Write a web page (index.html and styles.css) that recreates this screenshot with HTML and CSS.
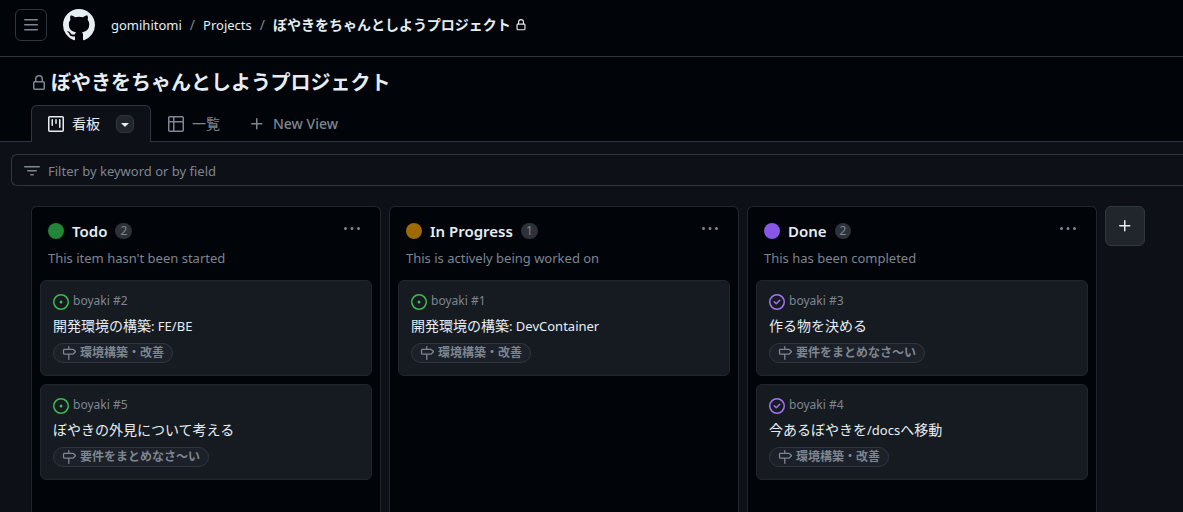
FILE: index.html
```html
<!DOCTYPE html>
<html lang="ja">
<head>
<meta charset="utf-8">
<meta name="viewport" content="width=device-width, initial-scale=1">
<title>ぼやきをちゃんとしようプロジェクト</title>
<link rel="stylesheet" href="styles.css">
</head>
<body>
<svg class="sprite" aria-hidden="true">
  <symbol id="i-bars" viewBox="0 0 16 16"><path d="M1 2.75A.75.75 0 0 1 1.75 2h12.5a.75.75 0 0 1 0 1.5H1.75A.75.75 0 0 1 1 2.75Zm0 5A.75.75 0 0 1 1.75 7h12.5a.75.75 0 0 1 0 1.5H1.75A.75.75 0 0 1 1 7.75ZM1.75 12h12.5a.75.75 0 0 1 0 1.5H1.75a.75.75 0 0 1 0-1.5Z"/></symbol>
  <symbol id="i-mark" viewBox="0 0 16 16"><path d="M8 0c4.42 0 8 3.58 8 8a8.013 8.013 0 0 1-5.45 7.59c-.4.08-.55-.17-.55-.38 0-.27.01-1.13.01-2.2 0-.75-.25-1.23-.54-1.48 1.78-.2 3.65-.88 3.65-3.95 0-.88-.31-1.59-.82-2.15.08-.2.36-1.02-.08-2.12 0 0-.67-.22-2.2.82-.64-.18-1.32-.27-2-.27-.68 0-1.36.09-2 .27-1.53-1.03-2.2-.82-2.2-.82-.44 1.1-.16 1.92-.08 2.12-.51.56-.82 1.28-.82 2.15 0 3.06 1.86 3.75 3.64 3.95-.23.2-.44.55-.51 1.07-.46.21-1.61.55-2.33-.66-.15-.24-.6-.83-1.23-.82-.67.01-.27.38.01.53.34.19.73.9.82 1.13.16.45.68 1.31 2.69.94 0 .67.01 1.3.01 1.49 0 .21-.15.45-.55.38A7.995 7.995 0 0 1 0 8c0-4.42 3.58-8 8-8Z"/></symbol>
  <symbol id="i-lock" viewBox="0 0 16 16"><path d="M4 4a4 4 0 0 1 8 0v2h.25c.966 0 1.75.784 1.75 1.75v5.5A1.75 1.75 0 0 1 12.25 15h-8.5A1.75 1.75 0 0 1 2 13.25v-5.5C2 6.784 2.784 6 3.75 6H4Zm8.25 3.5h-8.5a.25.25 0 0 0-.25.25v5.5c0 .138.112.25.25.25h8.5a.25.25 0 0 0 .25-.25v-5.5a.25.25 0 0 0-.25-.25ZM10.5 6V4a2.5 2.5 0 1 0-5 0v2Z"/></symbol>
  <symbol id="i-open" viewBox="0 0 16 16"><path d="M8 9.5a1.5 1.5 0 1 0 0-3 1.5 1.5 0 0 0 0 3Z"/><path d="M8 0a8 8 0 1 1 0 16A8 8 0 0 1 8 0ZM1.5 8a6.5 6.5 0 1 0 13 0 6.5 6.5 0 0 0-13 0Z"/></symbol>
  <symbol id="i-closed" viewBox="0 0 16 16"><path d="M11.28 6.78a.75.75 0 0 0-1.06-1.06L7.25 8.69 5.78 7.22a.75.75 0 0 0-1.06 1.06l2 2a.75.75 0 0 0 1.06 0l3.5-3.5Z"/><path d="M16 8A8 8 0 1 1 0 8a8 8 0 0 1 16 0Zm-1.5 0a6.5 6.5 0 1 0-13 0 6.5 6.5 0 0 0 13 0Z"/></symbol>
  <symbol id="i-milestone" viewBox="0 0 16 16"><path d="M7.75 0a.75.75 0 0 1 .75.75V3h3.634c.414 0 .814.147 1.13.414l2.07 1.75a1.75 1.75 0 0 1 0 2.672l-2.07 1.75a1.75 1.75 0 0 1-1.13.414H8.5v5.25a.75.75 0 0 1-1.5 0V10H2.75A1.75 1.75 0 0 1 1 8.25v-3.5C1 3.784 1.784 3 2.75 3H7V.75A.75.75 0 0 1 7.75 0Zm4.384 8.5a.25.25 0 0 0 .161-.06l2.07-1.75a.248.248 0 0 0 0-.38l-2.07-1.75a.25.25 0 0 0-.161-.06H2.75a.25.25 0 0 0-.25.25v3.5c0 .138.112.25.25.25h9.384Z"/></symbol>
  <symbol id="i-project" viewBox="0 0 16 16"><path d="M1.75 0h12.5C15.216 0 16 .784 16 1.75v12.5A1.75 1.75 0 0 1 14.25 16H1.75A1.75 1.75 0 0 1 0 14.25V1.75C0 .784.784 0 1.75 0ZM1.5 1.75v12.5c0 .138.112.25.25.25h12.5a.25.25 0 0 0 .25-.25V1.75a.25.25 0 0 0-.25-.25H1.75a.25.25 0 0 0-.25.25ZM11.75 3a.75.75 0 0 1 .75.75v7.5a.75.75 0 0 1-1.5 0v-7.5a.75.75 0 0 1 .75-.75Zm-8.25.75a.75.75 0 0 1 1.5 0v5.5a.75.75 0 0 1-1.5 0ZM8 3a.75.75 0 0 1 .75.75v3.5a.75.75 0 0 1-1.5 0v-3.5A.75.75 0 0 1 8 3Z"/></symbol>
  <symbol id="i-table" viewBox="0 0 16 16"><path d="M0 1.75C0 .784.784 0 1.75 0h12.5C15.216 0 16 .784 16 1.75v12.5A1.75 1.75 0 0 1 14.25 16H1.75A1.75 1.75 0 0 1 0 14.25ZM6.5 6.5v8h7.75a.25.25 0 0 0 .25-.25V6.5Zm8-1.5V1.75a.25.25 0 0 0-.25-.25H6.5V5Zm-13 1.5v7.75c0 .138.112.25.25.25H5v-8ZM5 5V1.5H1.75a.25.25 0 0 0-.25.25V5Z"/></symbol>
  <symbol id="i-filter" viewBox="0 0 16 16"><path d="M.75 3h14.5a.75.75 0 0 1 0 1.5H.75a.75.75 0 0 1 0-1.5ZM3 7.75A.75.75 0 0 1 3.75 7h8.5a.75.75 0 0 1 0 1.5h-8.5A.75.75 0 0 1 3 7.75Zm3 4a.75.75 0 0 1 .75-.75h2.5a.75.75 0 0 1 0 1.5h-2.5a.75.75 0 0 1-.75-.75Z"/></symbol>
  <symbol id="i-plus" viewBox="0 0 16 16"><path d="M7.75 2a.75.75 0 0 1 .75.75V7h4.25a.75.75 0 0 1 0 1.5H8.5v4.25a.75.75 0 0 1-1.5 0V8.5H2.75a.75.75 0 0 1 0-1.5H7V2.75A.75.75 0 0 1 7.75 2Z"/></symbol>
  <symbol id="i-down" viewBox="0 0 16 16"><path d="m4.427 7.427 3.396 3.396a.25.25 0 0 0 .354 0l3.396-3.396A.25.25 0 0 0 11.396 7H4.604a.25.25 0 0 0-.177.427Z"/></symbol>
  <symbol id="i-kebab" viewBox="0 0 16 16"><path d="M8 9a1.5 1.5 0 1 0 0-3 1.5 1.5 0 0 0 0 3ZM1.5 9a1.5 1.5 0 1 0 0-3 1.5 1.5 0 0 0 0 3Zm13 0a1.5 1.5 0 1 0 0-3 1.5 1.5 0 0 0 0 3Z"/></symbol>
</svg>

<header class="topbar">
  <button class="menu-button" type="button" aria-label="Open menu"><svg class="icon"><use href="#i-bars"/></svg></button>
  <a class="logo" href="#" aria-label="Home"><svg class="icon icon-logo"><use href="#i-mark"/></svg></a>
  <nav class="crumbs" aria-label="Breadcrumb">
    <a href="#">gomihitomi</a>
    <span class="slash">/</span>
    <a href="#">Projects</a>
    <span class="slash">/</span>
    <a class="crumb-current" href="#">ぼやきをちゃんとしようプロジェクト<svg class="icon icon-small"><use href="#i-lock"/></svg></a>
  </nav>
</header>

<section class="project-head">
  <h1 class="project-title"><svg class="icon"><use href="#i-lock"/></svg>ぼやきをちゃんとしようプロジェクト</h1>
  <nav class="tabs" aria-label="Views">
    <div class="tab tab-active">
      <a class="tab-link" href="#"><svg class="icon"><use href="#i-project"/></svg>看板</a>
      <button class="tab-menu" type="button" aria-label="View options"><svg class="icon"><use href="#i-down"/></svg></button>
    </div>
    <div class="tab"><a class="tab-link" href="#"><svg class="icon"><use href="#i-table"/></svg>一覧</a></div>
    <button class="new-view" type="button"><svg class="icon"><use href="#i-plus"/></svg>New View</button>
  </nav>
</section>

<main class="workspace">
  <div class="filter">
    <svg class="icon"><use href="#i-filter"/></svg>
    <input class="filter-input" type="text" aria-label="Filter" placeholder="Filter by keyword or by field">
  </div>

  <div class="board">
    <section class="column">
      <header class="column-head">
        <span class="dot dot-green"></span>
        <h2 class="column-title">Todo</h2>
        <span class="count">2</span>
        <button class="column-menu" type="button" aria-label="Todo options"><svg class="icon"><use href="#i-kebab"/></svg></button>
      </header>
      <p class="column-note">This item hasn't been started</p>
      <article class="card">
        <div class="card-ref"><svg class="icon icon-open"><use href="#i-open"/></svg><span>boyaki #2</span></div>
        <a class="card-title" href="#">開発環境の構築<span class="latin">: FE/BE</span></a>
        <a class="chip" href="#"><svg class="icon icon-chip"><use href="#i-milestone"/></svg>環境構築・改善</a>
      </article>
      <article class="card">
        <div class="card-ref"><svg class="icon icon-open"><use href="#i-open"/></svg><span>boyaki #5</span></div>
        <a class="card-title" href="#">ぼやきの外見について考える</a>
        <a class="chip" href="#"><svg class="icon icon-chip"><use href="#i-milestone"/></svg>要件をまとめなさ～い</a>
      </article>
    </section>

    <section class="column">
      <header class="column-head">
        <span class="dot dot-amber"></span>
        <h2 class="column-title">In Progress</h2>
        <span class="count">1</span>
        <button class="column-menu" type="button" aria-label="In Progress options"><svg class="icon"><use href="#i-kebab"/></svg></button>
      </header>
      <p class="column-note">This is actively being worked on</p>
      <article class="card">
        <div class="card-ref"><svg class="icon icon-open"><use href="#i-open"/></svg><span>boyaki #1</span></div>
        <a class="card-title" href="#">開発環境の構築<span class="latin">: DevContainer</span></a>
        <a class="chip" href="#"><svg class="icon icon-chip"><use href="#i-milestone"/></svg>環境構築・改善</a>
      </article>
    </section>

    <section class="column">
      <header class="column-head">
        <span class="dot dot-purple"></span>
        <h2 class="column-title">Done</h2>
        <span class="count">2</span>
        <button class="column-menu" type="button" aria-label="Done options"><svg class="icon"><use href="#i-kebab"/></svg></button>
      </header>
      <p class="column-note">This has been completed</p>
      <article class="card">
        <div class="card-ref"><svg class="icon icon-closed"><use href="#i-closed"/></svg><span>boyaki #3</span></div>
        <a class="card-title" href="#">作る物を決める</a>
        <a class="chip" href="#"><svg class="icon icon-chip"><use href="#i-milestone"/></svg>要件をまとめなさ～い</a>
      </article>
      <article class="card">
        <div class="card-ref"><svg class="icon icon-closed"><use href="#i-closed"/></svg><span>boyaki #4</span></div>
        <a class="card-title" href="#">今あるぼやきを<span class="latin">/docs</span>へ移動</a>
        <a class="chip" href="#"><svg class="icon icon-chip"><use href="#i-milestone"/></svg>環境構築・改善</a>
      </article>
    </section>

    <button class="add-column" type="button" aria-label="Add column"><svg class="icon"><use href="#i-plus"/></svg></button>
  </div>
</main>
</body>
</html>
```
FILE: styles.css
```css
:root {
  --canvas: #0d1117;
  --inset: #010409;
  --card: #161b22;
  --raised: #21262d;
  --border: #30363d;
  --border-muted: #21262d;
  --text: #e6edf3;
  --muted: #7d8590;
}

* { box-sizing: border-box; }

body {
  margin: 0;
  display: flex;
  flex-direction: column;
  height: 100vh;
  overflow: hidden;
  background: var(--canvas);
  color: var(--text);
  font: 13px/20px "Noto Sans", "Noto Sans CJK JP", sans-serif;
}

a { color: inherit; text-decoration: none; }

button {
  display: flex;
  align-items: center;
  justify-content: center;
  padding: 0;
  border: 0;
  background: none;
  color: var(--muted);
  font: inherit;
}

.sprite { position: absolute; width: 0; height: 0; }

.icon { flex: none; width: 16px; height: 16px; fill: currentColor; }
.icon-logo { width: 32px; height: 32px; }
.icon-small { width: 12px; height: 12px; }
.icon-chip { width: 14px; height: 14px; }
.icon-open { color: #3fb950; }
.icon-closed { color: #a371f7; }

/* Top bar */
.topbar {
  flex: none;
  display: flex;
  align-items: center;
  gap: 16px;
  padding: 9px 15px 15px;
  background: var(--inset);
  border-bottom: 1px solid var(--border);
}

.menu-button {
  width: 32px;
  height: 32px;
  border: 1px solid var(--border);
  border-radius: 6px;
}

.logo { display: flex; color: var(--text); }

.crumbs { display: flex; align-items: center; gap: 8px; white-space: nowrap; }
.slash { color: var(--muted); font-size: 14px; }

.crumb-current {
  display: flex;
  align-items: center;
  gap: 4px;
  font-size: 14px;
  font-weight: 600;
}

/* Project heading and view tabs */
.project-head {
  flex: none;
  padding: 10px 31px 0;
  background: var(--inset);
  box-shadow: inset 0 -1px var(--border);
}

.project-title {
  display: flex;
  align-items: center;
  gap: 4px;
  margin: 0 0 6px;
  font-size: 20px;
  font-weight: 600;
  line-height: 32px;
}

.project-title .icon { color: var(--muted); }

.tabs { display: flex; color: var(--muted); }

.tab {
  display: flex;
  align-items: center;
  gap: 16px;
  height: 37px;
  padding: 0 16px;
  border: 1px solid transparent;
  border-bottom: 0;
  border-radius: 6px 6px 0 0;
  font-size: 14px;
}

.tab-active { background: var(--canvas); border-color: var(--border); color: var(--text); }
.tab-link { display: flex; align-items: center; gap: 8px; }

.tab-menu {
  width: 18px;
  height: 18px;
  border: 1px solid var(--border);
  border-radius: 6px;
  background: var(--raised);
  color: var(--text);
}

.new-view { gap: 8px; padding: 0 12px; font-size: 14px; font-weight: 500; }

/* Filter */
.workspace {
  flex: 1;
  min-height: 0;
  display: flex;
  flex-direction: column;
}

.filter {
  flex: none;
  display: flex;
  align-items: center;
  gap: 8px;
  height: 32px;
  margin: 12px 0 20px 11px;
  padding-left: 12px;
  border: 1px solid var(--border);
  border-right: 0;
  border-radius: 6px 0 0 6px;
  color: var(--muted);
}

.filter .icon { margin-top: 2px; }

.filter-input {
  flex: 1;
  padding: 2px 0 0;
  border: 0;
  outline: 0;
  background: none;
  color: var(--text);
  font: inherit;
}

.filter-input::placeholder { color: var(--muted); opacity: 1; }

/* Board */
.board {
  flex: 1;
  min-height: 0;
  display: flex;
  gap: 8px;
  padding: 0 31px;
}

.column {
  flex: none;
  display: flex;
  flex-direction: column;
  gap: 8px;
  width: 350px;
  padding: 12px 8px 0;
  border: 1px solid var(--border-muted);
  border-bottom: 0;
  border-radius: 6px 6px 0 0;
  background: var(--inset);
}

.column-head { display: flex; align-items: center; gap: 8px; padding: 0 8px; }
.dot { width: 16px; height: 16px; border-radius: 50%; }
.dot-green { background: #238636; }
.dot-amber { background: #9e6a03; }
.dot-purple { background: #8957e5; }
.column-title { margin: 0; font-size: 15px; font-weight: 600; line-height: 24px; }

.count {
  min-width: 16px;
  padding: 0 5px;
  border-radius: 8px;
  background: #2d3239;
  color: var(--muted);
  font-size: 12px;
  line-height: 16px;
  text-align: center;
}

.column-menu { margin: 0 4px 4px auto; }
.column-note { margin: -3px 0 4px; padding: 0 8px; color: var(--muted); }

.card {
  display: flex;
  flex-direction: column;
  align-items: flex-start;
  padding: 12px;
  border: 1px solid var(--border-muted);
  border-radius: 6px;
  background: var(--card);
}

.card-ref {
  display: flex;
  align-items: flex-start;
  gap: 4px;
  margin-bottom: 6px;
  color: var(--muted);
  font-size: 12px;
  line-height: 16px;
}

.card-ref .icon { margin-top: 1px; }

.card-title { margin-bottom: 7px; font-size: 14px; }
.latin { font-size: 13px; }

.chip {
  display: flex;
  align-items: center;
  gap: 4px;
  padding: 0 8px;
  border: 1px solid var(--border);
  border-radius: 10px;
  background: #1c2129;
  color: var(--muted);
  font-size: 12px;
  font-weight: 600;
  line-height: 18px;
}

.add-column {
  flex: none;
  width: 40px;
  height: 40px;
  border: 1px solid var(--border);
  border-radius: 6px;
  background: var(--raised);
  color: var(--text);
}
```
